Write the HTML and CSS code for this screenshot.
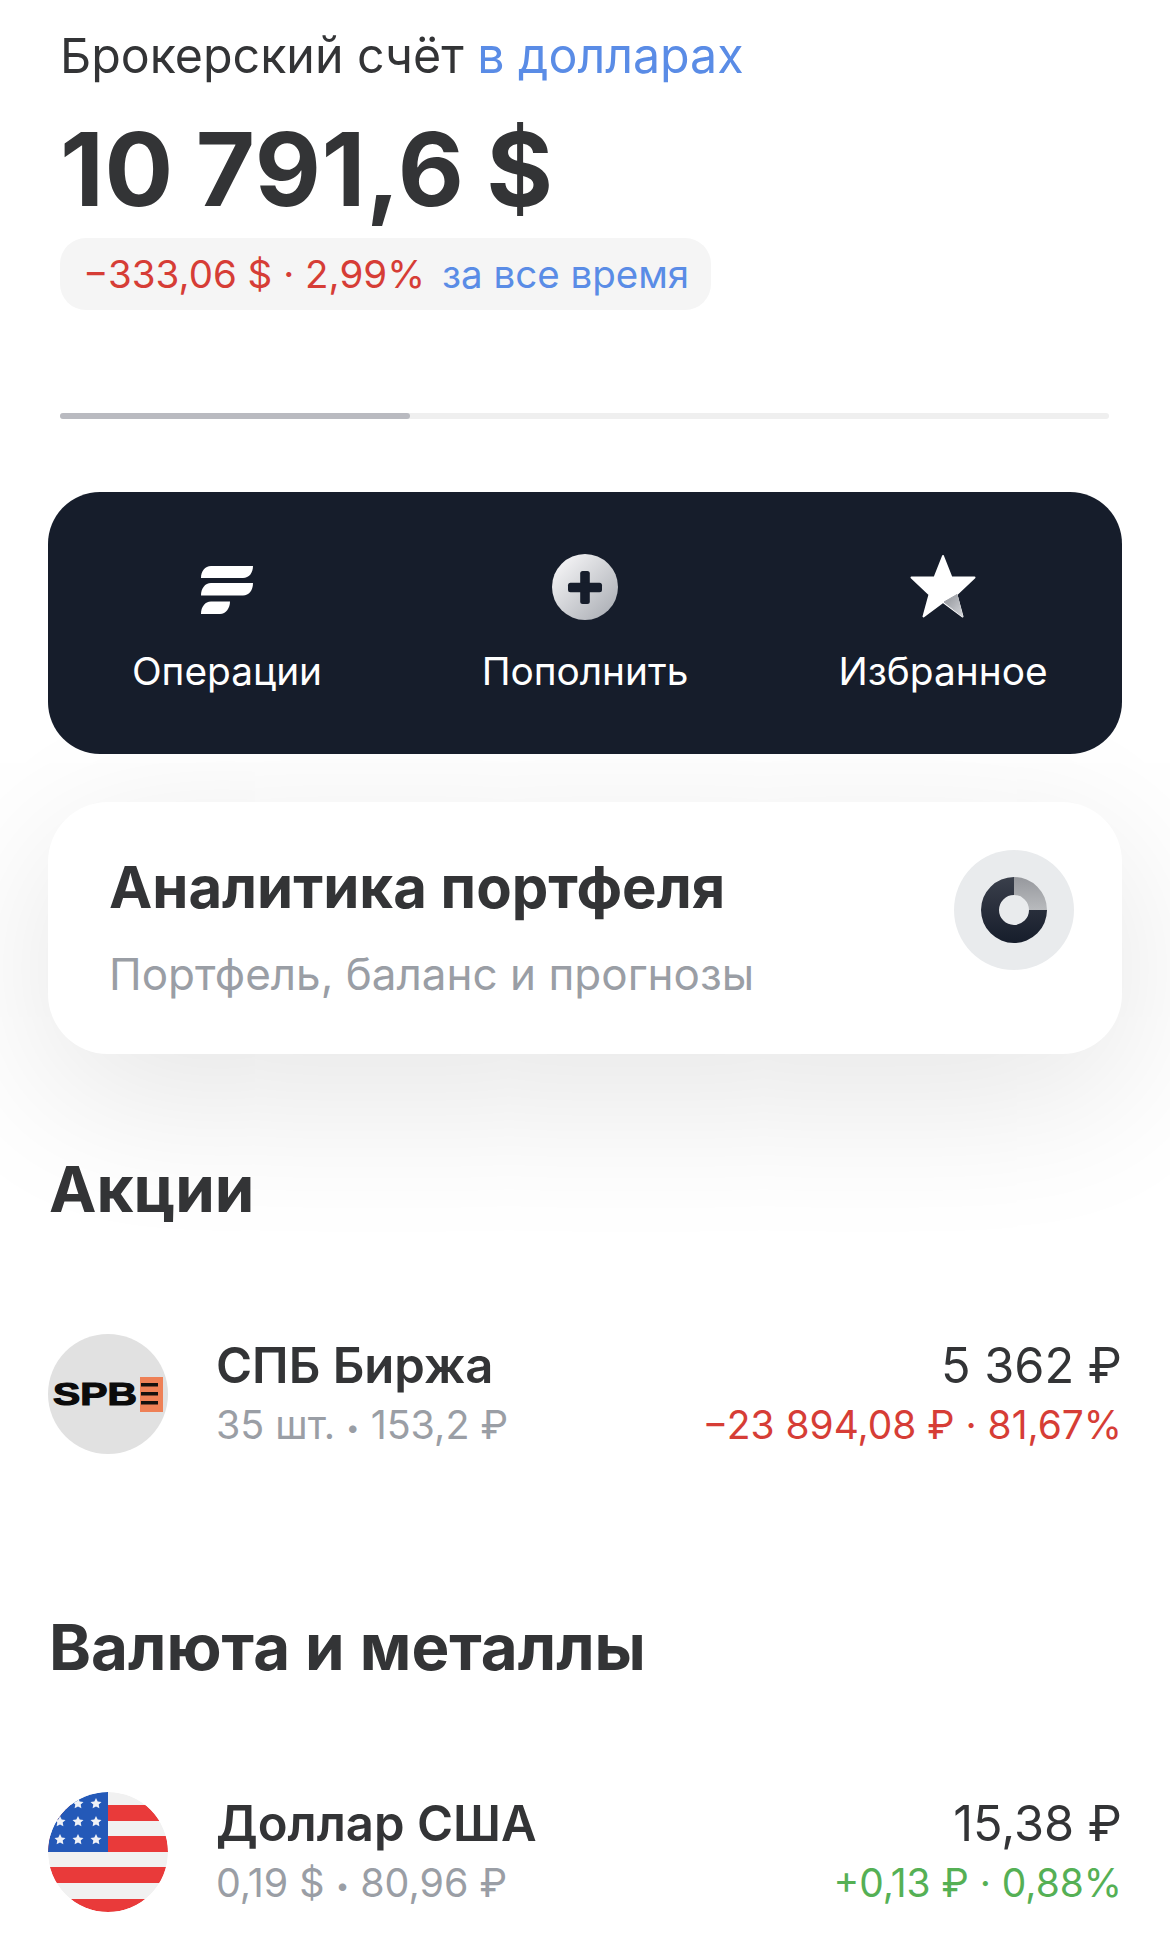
FILE: index.html
```html
<!DOCTYPE html>
<html lang="ru">
<head>
<meta charset="utf-8">
<title>Брокерский счёт</title>
<link rel="stylesheet" href="styles.css">
</head>
<body>
<main class="page">
  <section class="head">
    <h1 class="title">Брокерский счёт <span class="blue">в долларах</span></h1>
    <div class="total">10 791,6 $</div>
    <div class="pill"><span class="red">−333,06 $ · 2,99%</span><span class="blue">за все время</span></div>
    <div class="track"><div class="fill"></div></div>
  </section>

  <section class="actions">
    <div class="action">
      <svg class="icon" width="66" height="66" viewBox="0 0 66 66"><path fill="#fff" d="M7 24C7 17 11 12 17 12H59C59 19 55 24 49 24ZM7 41.500C7 34.500 11 29 17 29H59C59 36.500 55 41.500 49 41.500ZM7 60C7 53 11 47.500 17 47.500H36C36 54 32 60 26 60Z"/></svg>
      <span class="action-label">Операции</span>
    </div>
    <div class="action">
      <svg class="icon" width="66" height="66" viewBox="0 0 66 66">
        <defs><linearGradient id="plusGrad" x1="0.15" y1="0.15" x2="0.85" y2="0.85"><stop offset="0" stop-color="#f0f0f2"/><stop offset="1" stop-color="#b2b5bb"/></linearGradient></defs>
        <circle cx="33" cy="33" r="33" fill="url(#plusGrad)"/>
        <rect x="28.200" y="17" width="9.600" height="33" rx="2.500" fill="#161d2b"/>
        <rect x="16" y="28.700" width="34" height="9.600" rx="2.500" fill="#161d2b"/>
      </svg>
      <span class="action-label">Пополнить</span>
    </div>
    <div class="action">
      <svg class="icon" width="66" height="66" viewBox="0 0 66 66">
        <defs><linearGradient id="starGrad" x1="0" y1="0" x2="1" y2="1"><stop offset="0" stop-color="#8f9298"/><stop offset="1" stop-color="#d2d4d8"/></linearGradient></defs>
        <path fill="#fff" stroke="#fff" stroke-width="2" stroke-linejoin="round" d="M33 2L41.500 23.500H64.500L46.500 40.500L52.500 62.500L33 48L13.500 62.500L19.500 40.500L1.500 23.500H24.500Z"/>
        <path fill="url(#starGrad)" stroke="url(#starGrad)" stroke-width="1" stroke-linejoin="round" d="M34 48L47 40.500L52.500 62.500Z"/>
      </svg>
      <span class="action-label">Избранное</span>
    </div>
  </section>

  <section class="analytics">
    <div class="analytics-text">
      <div class="analytics-title">Аналитика портфеля</div>
      <div class="analytics-sub">Портфель, баланс и прогнозы</div>
    </div>
    <div class="donut-wrap">
      <svg width="66" height="66" viewBox="0 0 66 66">
        <defs>
          <linearGradient id="donutDark" x1="0" y1="0" x2="0" y2="1"><stop offset="0" stop-color="#3a3f4b"/><stop offset="1" stop-color="#161d2b"/></linearGradient>
          <linearGradient id="donutLight" x1="0" y1="0" x2="0" y2="1"><stop offset="0" stop-color="#96989d"/><stop offset="1" stop-color="#b8babd"/></linearGradient>
        </defs>
        <path fill="url(#donutDark)" d="M33 0v18a15 15 0 1 0 15 15h18A33 33 0 1 1 33 0z"/>
        <path fill="url(#donutLight)" d="M33 0a33 33 0 0 1 33 33H48a15 15 0 0 0-15-15z"/>
      </svg>
    </div>
  </section>

  <h2 class="section-title first">Акции</h2>
  <div class="row">
    <div class="logo spb">
      <svg width="120" height="120" viewBox="0 0 120 120">
        <text class="spb-text" x="5" y="71" textLength="84" lengthAdjust="spacingAndGlyphs">SPB</text>
        <rect x="92" y="43" width="23" height="35" fill="#ee8056"/>
        <rect x="93" y="49" width="17" height="3.500" fill="#14100e"/>
        <rect x="93" y="58" width="17" height="3.500" fill="#14100e"/>
        <rect x="93" y="67" width="17" height="3.500" fill="#14100e"/>
      </svg>
    </div>
    <div class="info">
      <div class="name">СПБ Биржа</div>
      <div class="sub">35 шт. <span class="sep">•</span> 153,2 ₽</div>
    </div>
    <div class="vals">
      <div class="value">5 362 ₽</div>
      <div class="delta red">−23 894,08 ₽ · 81,67%</div>
    </div>
  </div>

  <h2 class="section-title second">Валюта и металлы</h2>
  <div class="row">
    <div class="logo">
      <svg width="120" height="120" viewBox="0 0 120 120">
        <defs><clipPath id="flagClip"><circle cx="60" cy="60" r="60"/></clipPath></defs>
        <g clip-path="url(#flagClip)">
          <rect width="120" height="120" fill="#f1f1f1"/>
          <rect y="13" width="120" height="16" fill="#e93a3a"/>
          <rect y="44" width="120" height="16" fill="#e93a3a"/>
          <rect y="75" width="120" height="16" fill="#e93a3a"/>
          <rect y="107" width="120" height="16" fill="#e93a3a"/>
          <rect width="60" height="60" fill="#2459b8"/>
          <g fill="#eef1f7">
            <path d="M30 6l1.700 3.400 3.800.5-2.800 2.600.7 3.700-3.400-1.800-3.400 1.800.7-3.700-2.800-2.600 3.800-.5z"/>
            <path d="M48 6l1.700 3.400 3.800.5-2.800 2.600.7 3.700-3.400-1.800-3.400 1.800.7-3.700-2.800-2.600 3.800-.5z"/>
            <path d="M12 24l1.700 3.400 3.800.5-2.800 2.600.7 3.700-3.400-1.800-3.400 1.800.7-3.700-2.800-2.600 3.800-.5z"/>
            <path d="M30 24l1.700 3.400 3.800.5-2.800 2.600.7 3.700-3.400-1.800-3.400 1.800.7-3.700-2.800-2.600 3.800-.5z"/>
            <path d="M48 24l1.700 3.400 3.800.5-2.800 2.600.7 3.700-3.400-1.800-3.400 1.800.7-3.700-2.800-2.600 3.800-.5z"/>
            <path d="M12 42l1.700 3.400 3.800.5-2.800 2.600.7 3.700-3.400-1.800-3.400 1.800.7-3.700-2.800-2.600 3.800-.5z"/>
            <path d="M30 42l1.700 3.400 3.800.5-2.800 2.600.7 3.700-3.400-1.800-3.400 1.800.7-3.700-2.800-2.600 3.800-.5z"/>
            <path d="M48 42l1.700 3.400 3.800.5-2.800 2.600.7 3.700-3.400-1.800-3.400 1.800.7-3.700-2.800-2.600 3.800-.5z"/>
          </g>
        </g>
      </svg>
    </div>
    <div class="info">
      <div class="name">Доллар США</div>
      <div class="sub">0,19 $ <span class="sep">•</span> 80,96 ₽</div>
    </div>
    <div class="vals">
      <div class="value">15,38 ₽</div>
      <div class="delta green">+0,13 ₽ · 0,88%</div>
    </div>
  </div>
</main>
</body>
</html>
```

FILE: styles.css
```css
* { box-sizing: border-box; }
html, body { margin: 0; padding: 0; background: #fff; }
body {
  font-family: Inter, "Noto Sans", "Liberation Sans", sans-serif;
  color: #333436;
  -webkit-font-smoothing: antialiased;
}
.page { width: 1170px; height: 1955px; padding: 0 48px; overflow: hidden; }
.blue { color: #5a8ce6; }
.red { color: #d63d36; }
.green { color: #55b055; }

.head { padding: 28px 12px 0; }
.title { margin: 0; font-size: 48.300px; line-height: 56px; font-weight: 400; }
.total { margin-top: 29px; font-size: 102px; line-height: 112px; font-weight: 700; letter-spacing: .6px; word-spacing: -3px; }
.pill {
  display: inline-flex; align-items: center; gap: 17px;
  margin-top: 13px; height: 72px; padding: 0 22px 0 23px;
  border-radius: 26px; background: #f5f5f5;
  font-size: 38.500px;
}
.track { margin-top: 103px; width: 1049px; height: 6px; border-radius: 3px; background: #efefef; }
.fill { width: 350px; height: 6px; border-radius: 3px; background: #b9bac0; }

.actions {
  position: relative; z-index: 1;
  display: grid; grid-template-columns: repeat(3, 1fr);
  margin-top: 73px; height: 262px;
  background: #161d2b; border-radius: 52px;
  color: #fff; padding-top: 62px;
}
.action { display: flex; flex-direction: column; align-items: center; }
.icon { display: block; }
.action-label { margin-top: 28px; font-size: 38.800px; line-height: 46px; }

.analytics {
  display: flex; align-items: flex-start; justify-content: space-between;
  margin-top: 48px; height: 252px; padding: 0 48px 0 61px;
  background: #fff; border-radius: 60px;
  box-shadow: 0 40px 160px rgba(0, 0, 0, 0.11);
}
.analytics-text { padding-top: 51px; }
.analytics-title { font-size: 58px; line-height: 68px; font-weight: 700; }
.analytics-sub { margin-top: 28px; font-size: 44px; line-height: 50px; color: #9a9ea5; }
.donut-wrap {
  display: flex; align-items: center; justify-content: center;
  width: 120px; height: 120px; margin-top: 48px;
  border-radius: 50%; background: #e9ebed;
}
.donut-wrap svg { display: block; }

.section-title { margin: 0; padding-left: 1px; font-size: 63.600px; line-height: 76px; font-weight: 700; }
.section-title.first { margin-top: 97px; }
.section-title.second { margin-top: 155px; }

.row { display: flex; align-items: flex-start; height: 120px; margin-top: 107px; }
.logo { width: 120px; height: 120px; flex: none; border-radius: 50%; overflow: hidden; }
.logo svg { display: block; }
.spb { background: #e1e1e1; }
.spb-text { font-family: "Liberation Sans", sans-serif; font-weight: 700; font-size: 32px; fill: #0b0b0b; stroke: #0b0b0b; stroke-width: 1.2px; }
.info { margin-left: 48px; flex: 1; padding-top: 3px; }
.name { font-size: 49px; line-height: 58px; font-weight: 600; }
.sub { font-size: 39.400px; line-height: 46px; color: #9a9ea5; margin-top: 7px; }
.sep { font-size: 24px; vertical-align: 3px; }
.vals { text-align: right; padding-top: 3px; }
.value { font-size: 48.700px; line-height: 58px; }
.delta { font-size: 38.900px; line-height: 46px; margin-top: 7px; }
```
